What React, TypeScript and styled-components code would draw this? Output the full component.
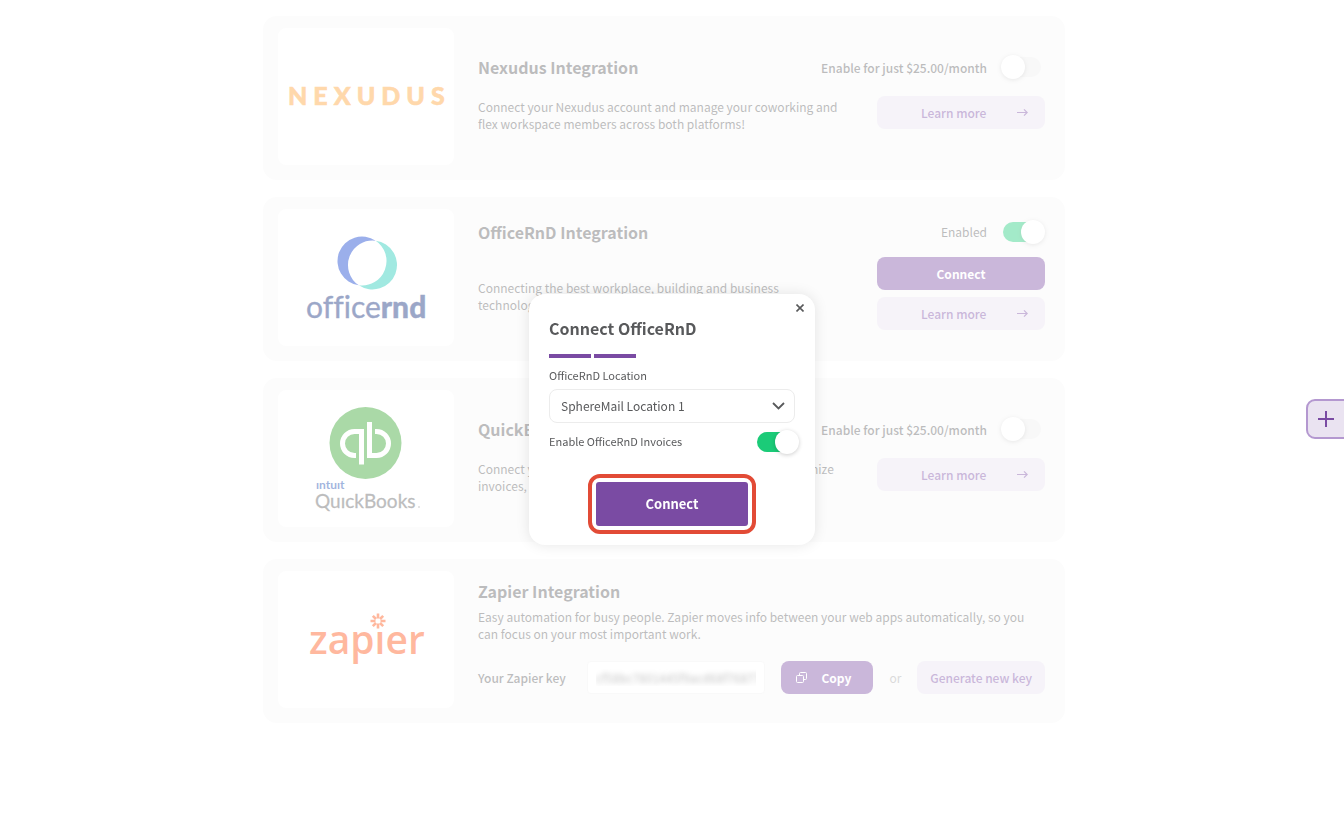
import React from "react";
import styled, { createGlobalStyle, css } from "styled-components";

const purple = "#7a4ba3";
const ink = "#58595b";
const green = "#1bcb78";

const GlobalStyle = createGlobalStyle`
  *, *::before, *::after { box-sizing: border-box; }
  body {
    margin: 0;
    background: #fff;
    color: ${ink};
    font-family: "Noto Sans CJK SC", "Noto Sans", sans-serif;
    font-size: 12px;
    line-height: 17px;
  }
  button, input, select { font: inherit; color: inherit; margin: 0; }
  h2, p { margin: 0; }
`;

const Page = styled.main`
  display: flex;
  justify-content: center;
  padding: 16px 32px 16px 16px;
`;

const List = styled.div`
  display: flex;
  flex-direction: column;
  gap: 17px;
  width: 100%;
  max-width: 802px;
`;

const Card = styled.section`
  display: flex;
  gap: 24px;
  padding: 12px 20px 15px 15px;
  border-radius: 14px;
  background: #f7f7f7;
`;

const LogoTile = styled.div`
  flex: none;
  width: 176px;
  height: 137px;
  border-radius: 8px;
  background: #fff;

  svg { display: block; }
`;

const Content = styled.div`
  flex: 1;
  min-width: 0;
  display: flex;
  flex-direction: column;
  justify-content: center;
  gap: 11px;
  padding-bottom: 8px;
`;

const Head = styled.div`
  display: flex;
  align-items: center;
  justify-content: space-between;
  height: 28px;
`;

const Title = styled.h2`
  font-size: 16px;
  font-weight: 700;
  line-height: 28px;
`;

const Status = styled.label<{ $strong?: boolean }>`
  display: flex;
  align-items: center;
  gap: 16px;
  padding-right: 4px;
  font-weight: ${(p) => (p.$strong ? 500 : 400)};
`;

const Toggle = styled.input.attrs({ type: "checkbox", role: "switch" })`
  appearance: none;
  position: relative;
  flex: none;
  width: 38px;
  height: 20px;
  border-radius: 10px;
  background: #ededed;

  &::before {
    content: "";
    position: absolute;
    top: -2px;
    left: -2px;
    width: 24px;
    height: 24px;
    border-radius: 50%;
    background: #fff;
    box-shadow: 0 1px 4px rgba(0, 0, 0, 0.2);
  }
  &:checked { background: ${green}; }
  &:checked::before { left: 18px; }
`;

const Body = styled.div`
  display: flex;
  align-items: center;
  justify-content: space-between;
  gap: 20px;
`;

const Description = styled.p`
  max-width: 364px;
  padding-top: 6px;
`;

const Actions = styled.div`
  flex: none;
  display: flex;
  flex-direction: column;
  gap: 7px;
  width: 168px;
`;

const solid = css`background: ${purple}; color: #fff; font-weight: 700;`;
const soft = css`background: #e8e1f0; color: ${purple}; font-weight: 500;`;

const Button = styled.button<{ $solid?: boolean }>`
  display: flex;
  align-items: center;
  justify-content: center;
  height: 33px;
  padding: 0 13px;
  border: 0;
  border-radius: 8px;
  white-space: nowrap;
  cursor: pointer;
  ${(p) => (p.$solid ? solid : soft)}
`;

const LearnMoreButton = styled(Button)`
  justify-content: space-between;
  padding: 0 17px 0 44px;
`;

const CopyButton = styled(Button)`
  gap: 14px;
  width: 92px;
  padding-right: 20px;
`;

const ZapierContent = styled(Content)`
  gap: 3px;
  padding-bottom: 9px;
`;

const KeyRow = styled.div`
  display: flex;
  align-items: center;
  gap: 16px;
  padding-top: 16px;
`;

const KeyLabel = styled.label`
  flex: none;
  padding-right: 5px;
  font-weight: 500;
`;

const KeyInput = styled.input`
  flex: 1;
  min-width: 0;
  height: 33px;
  padding: 0 8px;
  border: 1px solid #f0f0f0;
  border-radius: 4px;
  background: #fff;
  color: transparent;
  text-shadow: 0 0 5px #6a6a6a;
`;

const Or = styled.span`
  color: #a3a3a3;
`;

const SideTab = styled.button`
  position: fixed;
  z-index: 3;
  top: 50%;
  right: -2px;
  display: flex;
  align-items: center;
  justify-content: center;
  width: 40px;
  height: 40px;
  margin-top: -20px;
  padding: 0;
  border: 2px solid #b498d0;
  border-radius: 9px 0 0 9px;
  background: #eae3f1;
  color: ${purple};
`;

const Backdrop = styled.div`
  position: fixed;
  z-index: 2;
  inset: 0;
  display: flex;
  align-items: center;
  justify-content: center;
  background: rgba(255, 255, 255, 0.6);
`;

const Dialog = styled.form`
  position: relative;
  display: flex;
  flex-direction: column;
  width: 286px;
  padding: 22px 20px 11px;
  border-radius: 16px;
  background: #fff;
  box-shadow: 0 0 14px rgba(0, 0, 0, 0.1);
`;

const DialogTitle = styled.h2`
  font-size: 16px;
  font-weight: 700;
  line-height: 24px;
`;

const CloseButton = styled.button`
  position: absolute;
  top: 6px;
  right: 7px;
  display: flex;
  align-items: center;
  justify-content: center;
  width: 16px;
  height: 16px;
  padding: 0;
  border: 0;
  background: none;
`;

const Steps = styled.div`
  display: flex;
  gap: 3px;
  margin: 14px 0 9px;
`;

const Step = styled.span`
  width: 42px;
  height: 4px;
  background: ${purple};
`;

const FieldLabel = styled.label`
  font-size: 11px;
  line-height: 16px;
`;

const SelectBox = styled.div`
  display: grid;
  align-items: center;
  margin: 6px 0 7px;

  > * { grid-area: 1 / 1; }
  > svg {
    justify-self: end;
    margin-right: 10px;
    pointer-events: none;
  }
`;

const Select = styled.select`
  appearance: none;
  width: 100%;
  height: 34px;
  padding: 0 32px 0 11px;
  border: 1px solid #ececec;
  border-radius: 8px;
  background: #fff;
`;

const InvoiceRow = styled.label`
  display: flex;
  align-items: center;
  justify-content: space-between;
  height: 24px;
  font-size: 11px;
`;

const Highlight = styled.div`
  align-self: center;
  margin-top: 20px;
  padding: 4px;
  border: 4px solid #e24b36;
  border-radius: 12px;
`;

const ConnectButton = styled(Button)`
  width: 152px;
  height: 44px;
  border-radius: 3px;
  font-size: 13px;
`;

const Arrow = () => (
  <svg width="11" height="9" viewBox="0 0 11 9" fill="none" stroke="currentColor" strokeWidth="1.2">
    <path d="M0 4.5h10M7 1.3l3.2 3.2L7 7.7" />
  </svg>
);

const NexudusLogo = () => (
  <svg width="176" height="137" role="img" aria-label="Nexudus">
    <text
      x="10"
      y="77"
      fill="#ff9d2d"
      stroke="#ff9d2d"
      strokeWidth="0.600"
      fontFamily="Lato"
      fontWeight="900"
      fontSize="25"
      letterSpacing="6"
    >
      NEXUDUS
    </text>
  </svg>
);

const OfficeRndLogo = () => (
  <svg width="176" height="137" role="img" aria-label="officernd">
    <path
      fill="#0739cd"
      d="M97.700 31.700A24.500 24.500 0 1 0 80.800 76.300A24.500 24.500 0 0 1 97.700 31.700Z"
    />
    <path
      fill="#14c8b4"
      d="M97.700 31.700A24.500 24.500 0 1 1 80.800 76.300A24.500 24.500 0 0 0 97.700 31.700Z"
    />
    <g fill="#052375" stroke="#052375" strokeWidth="0.400" fontFamily="Lato" fontSize="30" style={{ fontVariantLigatures: "none" }}>
      <text x="28" y="109">office<tspan fontWeight="900">rnd</tspan></text>
    </g>
  </svg>
);

const QuickBooksLogo = () => (
  <svg width="176" height="137" role="img" aria-label="Intuit QuickBooks">
    <circle cx="87.500" cy="53" r="36" fill="#2ba023" />
    <g fill="none" stroke="#fff" strokeWidth="5">
      <path d="M83.500 74.500V41.500H76.500A12 12 0 0 0 76.500 65.500H78" />
      <path d="M91.500 32V65.500H98.500A12 12 0 0 0 98.500 41.500H97" />
    </g>
    <text x="38" y="99" fill="#0f46ac" fontFamily="Lato" fontWeight="700" fontSize="12">ıntuıt</text>
    <text x="37" y="118" fill={ink} stroke={ink} strokeWidth="0.300" fontFamily="Lato" fontSize="19">QuıckBooks</text>
    <circle cx="141" cy="117" r="1" fill="#aaa" />
  </svg>
);

const ZapierLogo = () => (
  <svg width="176" height="137" role="img" aria-label="Zapier">
    <text x="31" y="83" fill="#ff4f0e" fontFamily="Open Sans" fontWeight="600" fontSize="39">zapıer</text>
    <g stroke="#ff4f0e" strokeWidth="2.600" transform="translate(100 50)">
      <path d="M0-7.500V-2.500M0 7.500V2.500M-7.500 0H-2.500M7.500 0H2.500M-5.200-5.200L-2-2M5.200 5.200L2 2M-5.200 5.200L-2 2M5.200-5.200L2-2" />
    </g>
  </svg>
);

const LearnMore = () => (
  <LearnMoreButton type="button">
    Learn more
    <Arrow />
  </LearnMoreButton>
);

type IntegrationProps = {
  logo: React.ReactNode;
  title: string;
  description: string;
  enabled?: boolean;
};

const Integration = ({ logo, title, description, enabled }: IntegrationProps) => (
  <Card>
    <LogoTile>{logo}</LogoTile>
    <Content>
      <Head>
        <Title>{title}</Title>
        <Status $strong={!enabled}>
          {enabled ? "Enabled" : "Enable for just $25.00/month"}
          <Toggle defaultChecked={enabled} />
        </Status>
      </Head>
      <Body>
        <Description>{description}</Description>
        <Actions>
          {enabled && <Button type="button" $solid>Connect</Button>}
          <LearnMore />
        </Actions>
      </Body>
    </Content>
  </Card>
);

export default function App() {
  return (
    <>
      <GlobalStyle />
      <Page>
        <List>
          <Integration
            logo={<NexudusLogo />}
            title="Nexudus Integration"
            description="Connect your Nexudus account and manage your coworking and flex workspace members across both platforms!"
          />
          <Integration
            enabled
            logo={<OfficeRndLogo />}
            title="OfficeRnD Integration"
            description="Connecting the best workplace, building and business technology together."
          />
          <Integration
            logo={<QuickBooksLogo />}
            title="QuickBooks Integration"
            description="Connect your QuickBooks account to automatically synchronize invoices, and more."
          />
          <Card>
            <LogoTile><ZapierLogo /></LogoTile>
            <ZapierContent>
              <Title>Zapier Integration</Title>
              <p>
                Easy automation for busy people. Zapier moves info between your web apps
                automatically, so you can focus on your most important work.
              </p>
              <KeyRow>
                <KeyLabel htmlFor="zapier-key">Your Zapier key</KeyLabel>
                <KeyInput id="zapier-key" readOnly defaultValue="cf58bc7801445f9acd68f76877f" />
                <CopyButton type="button" $solid>
                  <svg width="11" height="11" viewBox="0 0 11 11" fill="none" stroke="currentColor">
                    <rect x="0.500" y="3.500" width="7" height="7" rx="1" />
                    <path d="M3.500 3.500V1.500a1 1 0 0 1 1-1h5a1 1 0 0 1 1 1v5a1 1 0 0 1-1 1h-2" />
                  </svg>
                  Copy
                </CopyButton>
                <Or>or</Or>
                <Button type="button">Generate new key</Button>
              </KeyRow>
            </ZapierContent>
          </Card>
        </List>
      </Page>

      <Backdrop>
        <Dialog role="dialog" aria-labelledby="dialog-title">
          <CloseButton type="button" aria-label="Close">
            <svg width="8" height="8" viewBox="0 0 8 8" stroke="currentColor" strokeWidth="1.600">
              <path d="M0.500 0.500l7 7M7.500 0.500l-7 7" />
            </svg>
          </CloseButton>
          <DialogTitle id="dialog-title">Connect OfficeRnD</DialogTitle>
          <Steps>
            <Step />
            <Step />
          </Steps>
          <FieldLabel htmlFor="location">OfficeRnD Location</FieldLabel>
          <SelectBox>
            <Select id="location">
              <option>SphereMail Location 1</option>
            </Select>
            <svg width="13" height="8" viewBox="0 0 13 8" fill="none" stroke="currentColor" strokeWidth="1.800">
              <path d="M1 1l5.500 5.500L12 1" />
            </svg>
          </SelectBox>
          <InvoiceRow>
            Enable OfficeRnD Invoices
            <Toggle defaultChecked />
          </InvoiceRow>
          <Highlight>
            <ConnectButton type="button" $solid>Connect</ConnectButton>
          </Highlight>
        </Dialog>
      </Backdrop>

      <SideTab type="button" aria-label="Add">
        <svg width="18" height="18" viewBox="0 0 18 18" stroke="currentColor" strokeWidth="2">
          <path d="M9 1v16M1 9h16" />
        </svg>
      </SideTab>
    </>
  );
}
